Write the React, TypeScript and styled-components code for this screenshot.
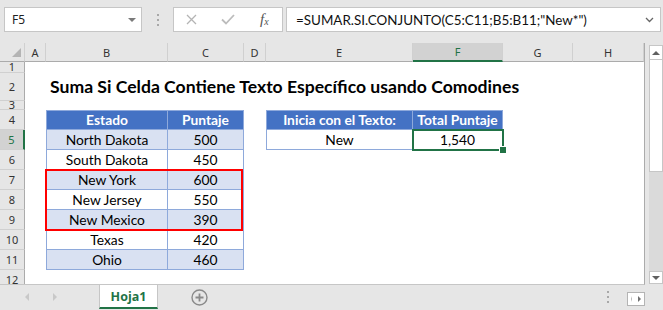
import React from 'react';
import styled, { createGlobalStyle } from 'styled-components';

const GREEN = '#217346';
const TABLE_LINE = '#8ea9db';

const COL_WIDTHS = [25, 21, 122, 76, 22, 147, 90, 70, 71];
const ROW_HEIGHTS = [19, 11, 28, 9, 20, 20, 20, 20, 20, 20, 20, 20, 20];
const LETTERS = ['A', 'B', 'C', 'D', 'E', 'F', 'G', 'H'];
const ROW_NUMBERS = [1, 2, 3, 4, 5, 6, 7, 8, 9, 10, 11, 12];

const STATES: [string, string][] = [
  ['North Dakota', '500'],
  ['South Dakota', '450'],
  ['New York', '600'],
  ['New Jersey', '550'],
  ['New Mexico', '390'],
  ['Texas', '420'],
  ['Ohio', '460'],
];

const GlobalStyle = createGlobalStyle`
  html, body {
    margin: 0;
    padding: 0;
    background: #e6e6e6;
  }
  body {
    font-family: Lato, "Liberation Sans", sans-serif;
    overflow: hidden;
  }
`;

const Window = styled.div`
  width: 663px;
  height: 310px;
  display: flex;
  flex-direction: column;
  background: #e6e6e6;
  overflow: hidden;
`;

/* ---------- formula bar ---------- */

const FormulaBar = styled.div`
  height: 43px;
  box-sizing: border-box;
  padding: 7px 2px 0 4px;
  display: flex;
  align-items: flex-start;
`;

const NameBox = styled.div`
  width: 138px;
  height: 25px;
  box-sizing: border-box;
  background: #fff;
  border: 1px solid #c6c6c6;
  display: flex;
  align-items: center;
  justify-content: space-between;
  padding: 0 5px 0 7px;
  font-family: "Noto Sans", "Open Sans", sans-serif;
  font-size: 12px;
  color: #222;
`;

const Caret = styled.span`
  width: 0;
  height: 0;
  border-left: 4px solid transparent;
  border-right: 4px solid transparent;
  border-top: 4px solid #7a7a7a;
`;

const DotsColumn = styled.div<{ $height: number }>`
  width: 31px;
  height: ${(p) => p.$height}px;
  display: flex;
  flex-direction: column;
  align-items: center;
  justify-content: center;
  gap: 3px;
`;

const Dot = styled.span`
  width: 2px;
  height: 2px;
  background: #a8a8a8;
`;

const FxBox = styled.div`
  width: 110px;
  height: 25px;
  box-sizing: border-box;
  background: #fff;
  border: 1px solid #c6c6c6;
  display: flex;
  align-items: center;
  padding: 0 0 0 12px;
  gap: 24px;
`;

const FxLabel = styled.span`
  font-family: "Liberation Serif", "DejaVu Serif", serif;
  font-style: italic;
  font-size: 15px;
  color: #555;
  margin-left: 1px;

  & sub {
    font-size: 10px;
    vertical-align: -1px;
    font-style: italic;
  }
`;

const FormulaInput = styled.div`
  flex: 1;
  height: 25px;
  margin-left: 3px;
  box-sizing: border-box;
  background: #fff;
  border: 1px solid #c6c6c6;
  display: flex;
  align-items: center;
  justify-content: space-between;
  padding: 0 6px 0 9px;
  font-size: 13.4px;
  color: #111;
  white-space: nowrap;
`;

/* ---------- sheet ---------- */

const Middle = styled.div`
  height: 242px;
  display: flex;
`;

const Sheet = styled.div`
  width: 645px;
  height: 242px;
  box-sizing: border-box;
  display: grid;
  grid-template-columns: ${COL_WIDTHS.map((w) => `${w}px`).join(' ')};
  grid-template-rows: ${ROW_HEIGHTS.map((h) => `${h}px`).join(' ')};
  background: #fff;
  border-right: 1px solid #ababab;
  border-bottom: 1px solid #c6c6c6;
  overflow: hidden;
`;

const Corner = styled.div`
  grid-column: 1;
  grid-row: 1;
  position: relative;
  background: #e6e6e6;
  box-sizing: border-box;
  border-right: 1px solid #d0d0d0;
  border-bottom: 1px solid #ababab;

  &::after {
    content: '';
    position: absolute;
    right: 3px;
    bottom: 4px;
    width: 0;
    height: 0;
    border-left: 9px solid transparent;
    border-bottom: 9px solid #b4b4b4;
  }
`;

const HeaderBase = styled.div<{ $selected?: boolean }>`
  box-sizing: border-box;
  display: flex;
  align-items: center;
  justify-content: center;
  font-family: "Noto Sans", "Open Sans", sans-serif;
  font-size: 11px;
  background: ${(p) => (p.$selected ? '#d2d2d2' : '#e6e6e6')};
  color: ${(p) => (p.$selected ? GREEN : '#333')};
  overflow: hidden;
`;

const ColHead = styled(HeaderBase)<{ $col: number }>`
  grid-column: ${(p) => p.$col};
  grid-row: 1;
  border-right: 1px solid #d0d0d0;
  border-bottom: ${(p) => (p.$selected ? `2px solid ${GREEN}` : '1px solid #ababab')};
`;

const RowHead = styled(HeaderBase)<{ $row: number; $height: number }>`
  grid-column: 1;
  grid-row: ${(p) => p.$row};
  border-bottom: 1px solid #d0d0d0;
  border-right: ${(p) => (p.$selected ? `2px solid ${GREEN}` : '1px solid #ababab')};
  line-height: ${(p) => Math.min(p.$height - 1, 17)}px;
`;

const Title = styled.div`
  grid-column: 3 / span 7;
  grid-row: 3;
  display: flex;
  align-items: flex-end;
  padding: 0 0 3px 4px;
  font-weight: 700;
  font-size: 17.6px;
  line-height: 22px;
  color: #000;
  white-space: nowrap;
`;

type CellKind = 'head' | 'band' | 'plain';

const Cell = styled.div<{ $col: number; $row: number; $kind: CellKind; $first?: boolean }>`
  grid-column: ${(p) => p.$col};
  grid-row: ${(p) => p.$row};
  box-sizing: border-box;
  display: flex;
  align-items: flex-end;
  justify-content: center;
  font-size: 13.8px;
  line-height: 18px;
  white-space: nowrap;
  background: ${(p) => (p.$kind === 'head' ? '#4472c4' : p.$kind === 'band' ? '#d9e1f2' : '#fff')};
  color: ${(p) => (p.$kind === 'head' ? '#fff' : '#000')};
  font-weight: ${(p) => (p.$kind === 'head' ? 700 : 400)};
  border-right: 1px solid ${TABLE_LINE};
  border-bottom: 1px solid ${TABLE_LINE};
  border-left: ${(p) => (p.$first ? `1px solid ${TABLE_LINE}` : 'none')};
  border-top: ${(p) => (p.$kind === 'head' ? `1px solid ${TABLE_LINE}` : 'none')};
`;

const RedFrame = styled.div`
  grid-column: 3 / span 2;
  grid-row: 8 / span 3;
  margin: -1px 1px -1px -1px;
  border: 2px solid #ff0000;
  z-index: 2;
  pointer-events: none;
`;

const Selection = styled.div`
  grid-column: 7;
  grid-row: 6;
  margin: -1px;
  border: 2px solid ${GREEN};
  position: relative;
  z-index: 3;
  pointer-events: none;
`;

const FillHandle = styled.span`
  position: absolute;
  right: -5px;
  bottom: -5px;
  width: 6px;
  height: 6px;
  background: ${GREEN};
  border: 1px solid #fff;
`;

/* ---------- vertical scrollbar ---------- */

const VScroll = styled.div`
  width: 18px;
  padding: 2px 0 0 4px;
  box-sizing: border-box;
  display: flex;
  flex-direction: column;
`;

const ScrollButton = styled.div<{ $height: number }>`
  height: ${(p) => p.$height}px;
  box-sizing: border-box;
  background: #fff;
  border: 1px solid #c6c6c6;
  display: flex;
  align-items: center;
  justify-content: center;
`;

const Thumb = styled.div`
  height: 112px;
  box-sizing: border-box;
  background: #fff;
  border: 1px solid #c6c6c6;
  border-top: none;
`;

const Track = styled.div`
  height: 99px;
  background: #dadada;
`;

/* ---------- sheet tabs ---------- */

const TabBar = styled.div`
  height: 25px;
  display: flex;
  align-items: flex-start;
`;

const NavArrows = styled.div`
  width: 99px;
  height: 24px;
  display: flex;
  align-items: center;
  padding-left: 25px;
  gap: 24px;
  box-sizing: border-box;
`;

const Tab = styled.div`
  width: 59px;
  height: 24px;
  box-sizing: border-box;
  background: #fff;
  border-left: 1px solid #c6c6c6;
  border-right: 1px solid #c6c6c6;
  border-bottom: 2px solid ${GREEN};
  display: flex;
  align-items: center;
  justify-content: center;
  font-family: "Open Sans", "Noto Sans", sans-serif;
  font-weight: 700;
  font-size: 12.5px;
  color: ${GREEN};
`;

const AddSheet = styled.div`
  width: 82px;
  height: 24px;
  display: flex;
  align-items: center;
  justify-content: center;
`;

const Spacer = styled.div`
  flex: 1;
`;

const ScrollToggle = styled.div`
  width: 18px;
  height: 14px;
  margin: 7px 18px 0 4px;
  box-sizing: border-box;
  border: 1px solid #b4b4b4;
  background: #fff;
  display: flex;
  align-items: center;
  justify-content: space-around;

  & > span:first-child {
    border-right: 1px solid #b4b4b4;
  }
`;

const Tri = styled.span<{ $dir: 'up' | 'down' | 'left' | 'right'; $color: string; $size: number }>`
  width: 0;
  height: 0;
  ${(p) =>
    p.$dir === 'up' || p.$dir === 'down'
      ? `border-left: ${p.$size}px solid transparent; border-right: ${p.$size}px solid transparent;
         border-${p.$dir === 'up' ? 'bottom' : 'top'}: ${p.$size}px solid ${p.$color};`
      : `border-top: ${p.$size}px solid transparent; border-bottom: ${p.$size}px solid transparent;
         border-${p.$dir === 'left' ? 'right' : 'left'}: ${p.$size}px solid ${p.$color};`}
`;

const Dots = ({ height }: { height: number }) => (
  <DotsColumn $height={height}>
    <Dot />
    <Dot />
    <Dot />
  </DotsColumn>
);

export default function App() {
  return (
    <Window>
      <GlobalStyle />
      <FormulaBar>
        <NameBox>
          F5
          <Caret />
        </NameBox>
        <Dots height={25} />
        <FxBox>
          <svg width="11" height="11" viewBox="0 0 11 11">
            <path d="M1 1 L10 10 M10 1 L1 10" stroke="#b4b4b4" strokeWidth="1.3" fill="none" />
          </svg>
          <svg width="14" height="11" viewBox="0 0 14 11">
            <path d="M1 5.5 L5 9.5 L13 1" stroke="#bcbcbc" strokeWidth="1.8" fill="none" />
          </svg>
          <FxLabel>
            f<sub>x</sub>
          </FxLabel>
        </FxBox>
        <FormulaInput>
          =SUMAR.SI.CONJUNTO(C5:C11;B5:B11;"New*")
          <svg width="9" height="6" viewBox="0 0 9 6">
            <path d="M1 1 L4.5 4.5 L8 1" stroke="#666" strokeWidth="1.3" fill="none" />
          </svg>
        </FormulaInput>
      </FormulaBar>

      <Middle>
        <Sheet>
          <Corner />
          {LETTERS.map((l, i) => (
            <ColHead key={l} $col={i + 2} $selected={l === 'F'}>
              {l}
            </ColHead>
          ))}
          {ROW_NUMBERS.map((n) => (
            <RowHead key={n} $row={n + 1} $height={ROW_HEIGHTS[n]} $selected={n === 5}>
              {n}
            </RowHead>
          ))}

          <Title>Suma Si Celda Contiene Texto Específico usando Comodines</Title>

          <Cell $col={3} $row={5} $kind="head" $first>
            Estado
          </Cell>
          <Cell $col={4} $row={5} $kind="head">
            Puntaje
          </Cell>
          {STATES.map(([name, score], i) => {
            const kind: CellKind = i % 2 === 0 ? 'band' : 'plain';
            return (
              <React.Fragment key={name}>
                <Cell $col={3} $row={i + 6} $kind={kind} $first>
                  {name}
                </Cell>
                <Cell $col={4} $row={i + 6} $kind={kind}>
                  {score}
                </Cell>
              </React.Fragment>
            );
          })}

          <Cell $col={6} $row={5} $kind="head" $first>
            Inicia con el Texto:
          </Cell>
          <Cell $col={7} $row={5} $kind="head">
            Total Puntaje
          </Cell>
          <Cell $col={6} $row={6} $kind="plain" $first>
            New
          </Cell>
          <Cell $col={7} $row={6} $kind="plain">
            1,540
          </Cell>

          <RedFrame />
          <Selection>
            <FillHandle />
          </Selection>
        </Sheet>

        <VScroll>
          <ScrollButton $height={15}>
            <Tri $dir="up" $color="#606060" $size={4} />
          </ScrollButton>
          <Thumb />
          <Track />
          <ScrollButton $height={13}>
            <Tri $dir="down" $color="#606060" $size={4} />
          </ScrollButton>
        </VScroll>
      </Middle>

      <TabBar>
        <NavArrows>
          <Tri $dir="left" $color="#c8c8c8" $size={4} />
          <Tri $dir="right" $color="#c8c8c8" $size={4} />
        </NavArrows>
        <Tab>Hoja1</Tab>
        <AddSheet>
          <svg width="17" height="17" viewBox="0 0 17 17">
            <circle cx="8.5" cy="8.5" r="7.5" stroke="#8a8a8a" strokeWidth="1.4" fill="none" />
            <path d="M8.5 4.5 V12.5 M4.5 8.5 H12.5" stroke="#8a8a8a" strokeWidth="1.8" />
          </svg>
        </AddSheet>
        <Spacer />
        <Dots height={24} />
        <ScrollToggle>
          <Tri $dir="left" $color="#707070" $size={3} />
          <Tri $dir="right" $color="#707070" $size={3} />
        </ScrollToggle>
      </TabBar>
    </Window>
  );
}
